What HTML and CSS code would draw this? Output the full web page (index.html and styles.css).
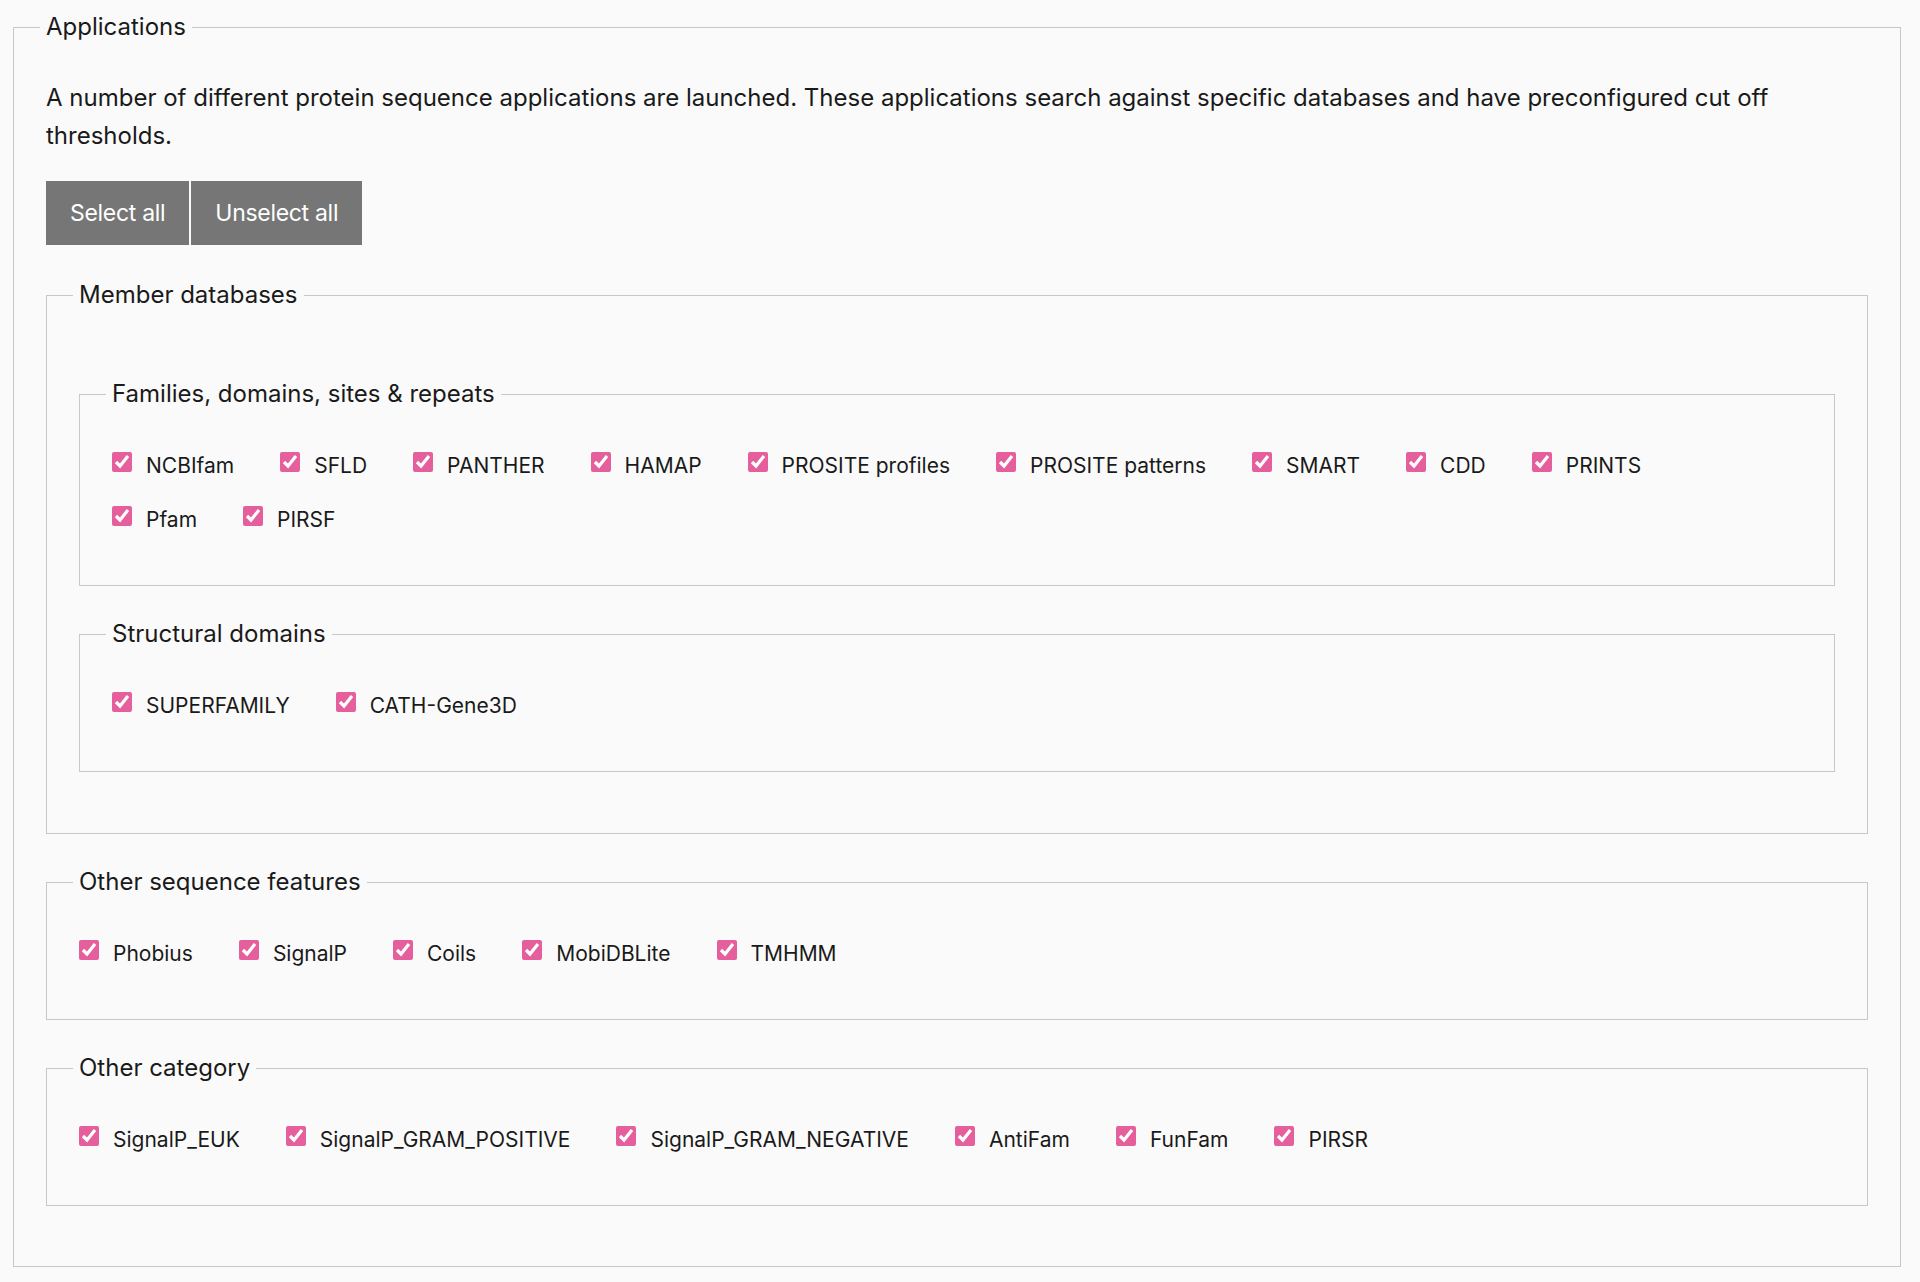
FILE: index.html
```html
<!DOCTYPE html>
<html lang="en">
<head>
<meta charset="utf-8">
<title>Applications</title>
<link rel="stylesheet" href="styles.css">
</head>
<body>
<div class="page">
  <fieldset class="group group--outer">
    <legend class="group__legend">Applications</legend>
    <p class="intro">A number of different protein sequence applications are launched. These applications search against specific databases and have preconfigured cut off thresholds.</p>
    <div class="actions">
      <button type="button" class="btn">Select all</button>
      <button type="button" class="btn">Unselect all</button>
    </div>

    <fieldset class="group group--members">
      <legend class="group__legend">Member databases</legend>

      <fieldset class="group group--list">
        <legend class="group__legend">Families, domains, sites &amp; repeats</legend>
        <div class="checklist">
          <label class="check"><input type="checkbox" checked><span>NCBIfam</span></label>
          <label class="check"><input type="checkbox" checked><span>SFLD</span></label>
          <label class="check"><input type="checkbox" checked><span>PANTHER</span></label>
          <label class="check"><input type="checkbox" checked><span>HAMAP</span></label>
          <label class="check"><input type="checkbox" checked><span>PROSITE profiles</span></label>
          <label class="check"><input type="checkbox" checked><span>PROSITE patterns</span></label>
          <label class="check"><input type="checkbox" checked><span>SMART</span></label>
          <label class="check"><input type="checkbox" checked><span>CDD</span></label>
          <label class="check"><input type="checkbox" checked><span>PRINTS</span></label>
          <label class="check"><input type="checkbox" checked><span>Pfam</span></label>
          <label class="check"><input type="checkbox" checked><span>PIRSF</span></label>
        </div>
      </fieldset>

      <fieldset class="group group--list">
        <legend class="group__legend">Structural domains</legend>
        <div class="checklist">
          <label class="check"><input type="checkbox" checked><span>SUPERFAMILY</span></label>
          <label class="check"><input type="checkbox" checked><span>CATH-Gene3D</span></label>
        </div>
      </fieldset>
    </fieldset>

    <fieldset class="group group--list">
      <legend class="group__legend">Other sequence features</legend>
      <div class="checklist">
        <label class="check"><input type="checkbox" checked><span>Phobius</span></label>
        <label class="check"><input type="checkbox" checked><span>SignalP</span></label>
        <label class="check"><input type="checkbox" checked><span>Coils</span></label>
        <label class="check"><input type="checkbox" checked><span>MobiDBLite</span></label>
        <label class="check"><input type="checkbox" checked><span>TMHMM</span></label>
      </div>
    </fieldset>

    <fieldset class="group group--list">
      <legend class="group__legend">Other category</legend>
      <div class="checklist">
        <label class="check"><input type="checkbox" checked><span>SignalP_EUK</span></label>
        <label class="check"><input type="checkbox" checked><span>SignalP_GRAM_POSITIVE</span></label>
        <label class="check"><input type="checkbox" checked><span>SignalP_GRAM_NEGATIVE</span></label>
        <label class="check"><input type="checkbox" checked><span>AntiFam</span></label>
        <label class="check"><input type="checkbox" checked><span>FunFam</span></label>
        <label class="check"><input type="checkbox" checked><span>PIRSR</span></label>
      </div>
    </fieldset>
  </fieldset>
</div>
</body>
</html>
```

FILE: styles.css
```css
html, body {
  margin: 0;
  padding: 0;
  background: #fafafa;
}

body {
  font-family: Inter, "Liberation Sans", sans-serif;
  font-size: 24px;
  line-height: 36px;
  color: #1a1a1a;
}

.page {
  padding: 9px 19px 16px 13px;
}

.group {
  margin: 0;
  min-width: 0;
  border: 1px solid #c8c8c8;
}

.group__legend {
  padding: 0 6px;
  margin-left: -6px;
  line-height: 36px;
}

.group--outer {
  padding: 34px 32px 60px;
}

.group--members {
  margin-top: 32px;
  padding: 63px 32px 61px;
}

.group--list {
  margin-top: 30px;
  padding: 35px 32px 48px;
}

.group--members > .group--list:first-of-type {
  margin-top: 0;
}

.intro {
  margin: 0;
  line-height: 38px;
}

.actions {
  display: flex;
  gap: 2px;
  margin-top: 26px;
}

.btn {
  height: 64px;
  padding: 0 24px;
  border: 0;
  border-radius: 0;
  background: #767676;
  color: #ffffff;
  font-family: inherit;
  font-size: 23px;
  letter-spacing: -0.3px;
  cursor: pointer;
}

.checklist {
  display: flex;
  flex-wrap: wrap;
  row-gap: 18px;
}

.check {
  display: inline-flex;
  align-items: flex-start;
  height: 36px;
  margin-right: 46px;
  font-size: 21px;
  line-height: 34px;
  cursor: pointer;
}

.check span {
  padding-top: 2px;
}

.check input {
  width: 20px;
  height: 20px;
  margin: 5px 14px 0 0;
  accent-color: #e45f9b;
}
```
